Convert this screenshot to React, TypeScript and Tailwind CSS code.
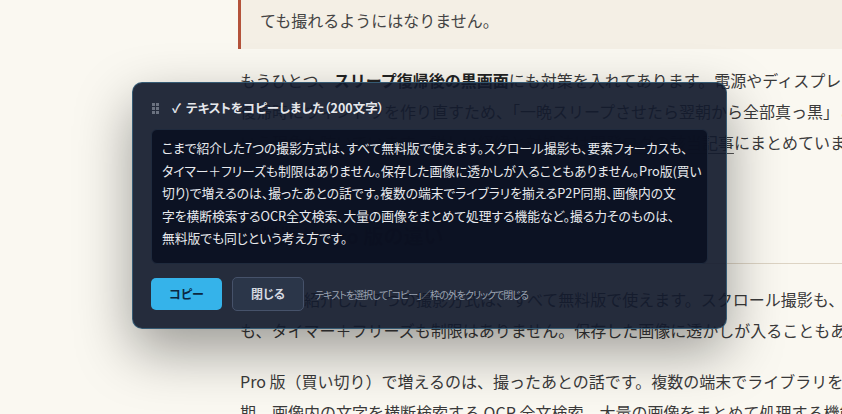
import React from "react";

const jp = "font-['Noto_Sans_CJK_JP','Noto_Sans',sans-serif]";

function GripIcon() {
	return (
		<svg width="7" height="11" viewBox="0 0 7 11" className="shrink-0">
			{[0, 4].map((x) =>
				[0, 4, 8].map((y) => (
					<rect key={`${x}-${y}`} x={x} y={y} width="3" height="3" fill="#6b7280" />
				)),
			)}
		</svg>
	);
}

const copiedLines = [
	"こまで紹介した7つの撮影方式は、すべて無料版で使えます。スクロール撮影も、要素フォーカスも、",
	"タイマー＋フリーズも制限はありません。保存した画像に透かしが入ることもありません。Pro版(買い",
	"切り)で増えるのは、撮ったあとの話です。複数の端末でライブラリを揃えるP2P同期、画像内の文",
	"字を横断検索するOCR全文検索、大量の画像をまとめて処理する機能など。撮る力そのものは、",
	"無料版でも同じという考え方です。",
];

function CopyDialog() {
	return (
		<div className="absolute left-[132px] top-[82px] w-[595px] rounded-[10px] border border-[#3d6f8c]/70 bg-[#121a2c]/[0.92] px-[18px] pt-[15px] pb-[17px] shadow-[0_22px_55px_rgba(0,0,0,0.38)] [font-feature-settings:'palt']">
			<div className="flex h-5 items-center pl-[1px] text-[12.5px] font-bold text-[#e5e7eb]">
				<GripIcon />
				<span className="ml-[13px]">✓</span>
				<span className="ml-[5px]">テキストをコピーしました（200文字）</span>
			</div>
			<div className="mt-[11px] h-[135px] rounded-[6px] border border-[#1f2a3d] bg-[#0a1020]/90 px-[10px] pt-[7px] text-[12.75px] leading-[22.5px] text-[#e8eaee]">
				{copiedLines.map((line) => (
					<div key={line} className="whitespace-nowrap">
						{line}
					</div>
				))}
			</div>
			<div className="mt-[13px] flex items-center gap-[10px]">
				<button
					type="button"
					className="h-[32px] w-[71px] rounded-[5px] bg-[#35b3ea] text-[12px] font-bold text-[#0b2740]"
				>
					コピー
				</button>
				<button
					type="button"
					className="h-[34px] w-[72px] rounded-[5px] border border-[#46526a] bg-[#2b3649] text-[12px] font-bold text-[#d6dae2]"
				>
					閉じる
				</button>
				<span className="ml-[1px] text-[10px] tracking-[-1px] text-[#9aa3b2]">
					テキストを選択して「コピー」／枠の外をクリックで閉じる
				</span>
			</div>
		</div>
	);
}

export default function App() {
	return (
		<div className={`relative h-[414px] w-[842px] overflow-hidden bg-[#faf8f1] ${jp}`}>
			<div className="pl-[238px] text-[16px] leading-[31px] text-[#3a3a3a]">
				<blockquote className="-mt-[38px] border-l-[3px] border-[#b4533b] bg-[#f4efe5] pt-3 pb-[12.5px] pl-[19px] text-[#444]">
					<div className="whitespace-nowrap">
						起動中にほかのアプリが画面をロックしている場合は、どの撮影方式を使っ
					</div>
					<div className="whitespace-nowrap">ても撮れるようにはなりません。</div>
				</blockquote>

				<div className="mt-4 pl-[2px]">
					<div className="whitespace-nowrap">
						もうひとつ、<strong className="font-bold text-[#222]">スリープ復帰後の黒画面</strong>
						にも対策を入れてあります。電源やディスプレイの
					</div>
					<div className="whitespace-nowrap">
						復帰時にウィンドウを作り直すため、「一晩スリープさせたら翌朝から全部真っ黒」と
					</div>
					<div className="whitespace-nowrap">
						いう現象も防いでいます。詳しい経緯と対処法は
						<span className="underline decoration-[#555] underline-offset-4">開発ログの該当記事</span>
						にまとめています。
					</div>
				</div>

				<h2 className="mt-[63px] ml-[2px] border-b border-[#ddd4c4] pb-3 text-[20px] leading-[30px] font-bold text-[#2b2b2b]">
					無料版と Pro 版の違い
				</h2>

				<div className="mt-5 pl-[2px]">
					<div className="whitespace-nowrap">
						ここまで紹介した 7 つの撮影方式は、すべて無料版で使えます。スクロール撮影も、要素フォーカス
					</div>
					<div className="whitespace-nowrap">
						も、タイマー＋フリーズも制限はありません。保存した画像に透かしが入ることもありません。
					</div>
				</div>

				<div className="mt-5 pl-[2px]">
					<div className="whitespace-nowrap">
						Pro 版（買い切り）で増えるのは、撮ったあとの話です。複数の端末でライブラリを揃える P2P 同
					</div>
					<div className="whitespace-nowrap">
						期、画像内の文字を横断検索する OCR 全文検索、大量の画像をまとめて処理する機能などです。
					</div>
				</div>
			</div>

			<CopyDialog />
		</div>
	);
}
